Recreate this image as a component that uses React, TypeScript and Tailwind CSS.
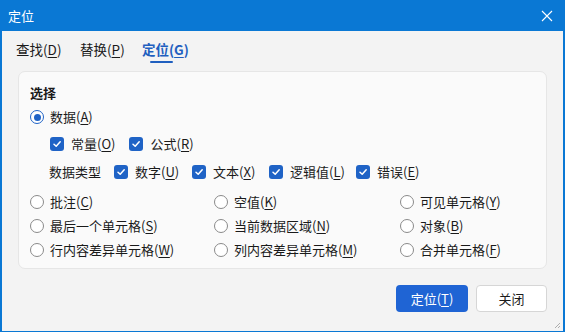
import React from 'react';

const font = { fontFamily: '"Noto Sans CJK SC", "Noto Sans", sans-serif' };

const Key: React.FC<{ k: string }> = ({ k }) => (
  <>
    (<span className="underline underline-offset-2 decoration-1">{k}</span>)
  </>
);

const Check: React.FC<{ label: string; k: string; className?: string }> = ({ label, k, className }) => (
  <div className={`flex items-center gap-[7px] ${className ?? ''}`}>
    <span className="w-[14px] h-[14px] rounded-[3px] bg-[#1f63c6] flex items-center justify-center">
      <svg width="10" height="10" viewBox="0 0 10 10">
        <path d="M2 5.2 L4.2 7.3 L8.2 2.8" fill="none" stroke="white" strokeWidth="1.5" strokeLinecap="round" strokeLinejoin="round" />
      </svg>
    </span>
    <span>
      {label}
      <Key k={k} />
    </span>
  </div>
);

const Radio: React.FC<{ label: string; k: string; on?: boolean }> = ({ label, k, on }) => (
  <div className="flex items-center gap-[6px]">
    {on ? (
      <span className="w-[14px] h-[14px] rounded-full border border-[#1f63c6] flex items-center justify-center bg-white">
        <span className="w-[7px] h-[7px] rounded-full bg-[#1f63c6]" />
      </span>
    ) : (
      <span className="w-[14px] h-[14px] rounded-full border border-[#8a8a8a] bg-white" />
    )}
    <span>
      {label}
      <Key k={k} />
    </span>
  </div>
);

export default function App() {
  const radios: [string, string][] = [
    ['批注', 'C'],
    ['空值', 'K'],
    ['可见单元格', 'Y'],
    ['最后一个单元格', 'S'],
    ['当前数据区域', 'N'],
    ['对象', 'B'],
    ['行内容差异单元格', 'W'],
    ['列内容差异单元格', 'M'],
    ['合并单元格', 'F'],
  ];

  return (
    <div className="w-[565px] h-[332px] flex flex-col bg-[#f3f3f3] text-[13px] text-[#1a1a1a] overflow-hidden" style={font}>
      {/* title bar */}
      <div className="h-[31px] shrink-0 bg-[#0a78d4] flex items-center justify-between pl-[8px] pr-[12px] text-white">
        <span className="text-[13px]">定位</span>
        <svg width="12" height="12" viewBox="0 0 12 12">
          <path d="M1 1 L11 11 M11 1 L1 11" stroke="white" strokeWidth="1.1" />
        </svg>
      </div>

      <div className="flex-1 flex flex-col border-x-2 border-b border-[#0a78d4] relative">
        {/* tabs */}
        <div className="flex h-[40px] items-start pt-[8px] pl-[14px] text-[13.5px]">
          <div className="w-[64px]">
            查找<Key k="D" />
          </div>
          <div className="w-[62px]">
            替换<Key k="P" />
          </div>
          <div className="flex flex-col items-center text-[#1f5fbf] font-bold">
            <span>
              定位<Key k="G" />
            </span>
            <span className="w-[23px] h-[2px] bg-[#1f5fbf] rounded-full mt-[2px] mr-[8px]" />
          </div>
        </div>

        {/* panel */}
        <div className="mx-[16px] h-[198px] bg-[#fafafa] border border-[#e6e6e6] rounded-[7px] pt-[10px] pl-[11px] pr-[12px]">
          <div className="h-[22px] flex items-center font-bold">选择</div>
          <div className="h-[26px] flex items-center">
            <Radio label="数据" k="A" on />
          </div>
          <div className="h-[28px] flex items-center pl-[20px]">
            <Check label="常量" k="O" />
            <Check label="公式" k="R" className="ml-[14px]" />
          </div>
          <div className="h-[28px] flex items-center pl-[19px]">
            <span className="w-[65px]">数据类型</span>
            <Check label="数字" k="U" className="w-[78px]" />
            <Check label="文本" k="X" className="w-[77px]" />
            <Check label="逻辑值" k="L" className="w-[87px]" />
            <Check label="错误" k="E" />
          </div>
          <div className="grid grid-cols-[184px_186px_1fr] mt-[4px]">
            {radios.map(([l, k]) => (
              <div key={l} className="h-[24px] flex items-center">
                <Radio label={l} k={k} />
              </div>
            ))}
          </div>
        </div>

        {/* buttons */}
        <div className="flex justify-end gap-[8px] pr-[16px] pt-[16px]">
          <button className="w-[72px] h-[27px] rounded-[4px] bg-[#1f64d4] text-white text-[13px]">
            定位<Key k="T" />
          </button>
          <button className="w-[71px] h-[27px] rounded-[4px] bg-white border border-[#d6d6d6] text-[13px]">
            关闭
          </button>
        </div>

        <svg className="absolute right-[2px] bottom-[2px]" width="8" height="8" viewBox="0 0 8 8">
          <path d="M7 2 L2 7 M7 5 L5 7" stroke="#9a9a9a" strokeWidth="0.8" />
        </svg>
      </div>
    </div>
  );
}
